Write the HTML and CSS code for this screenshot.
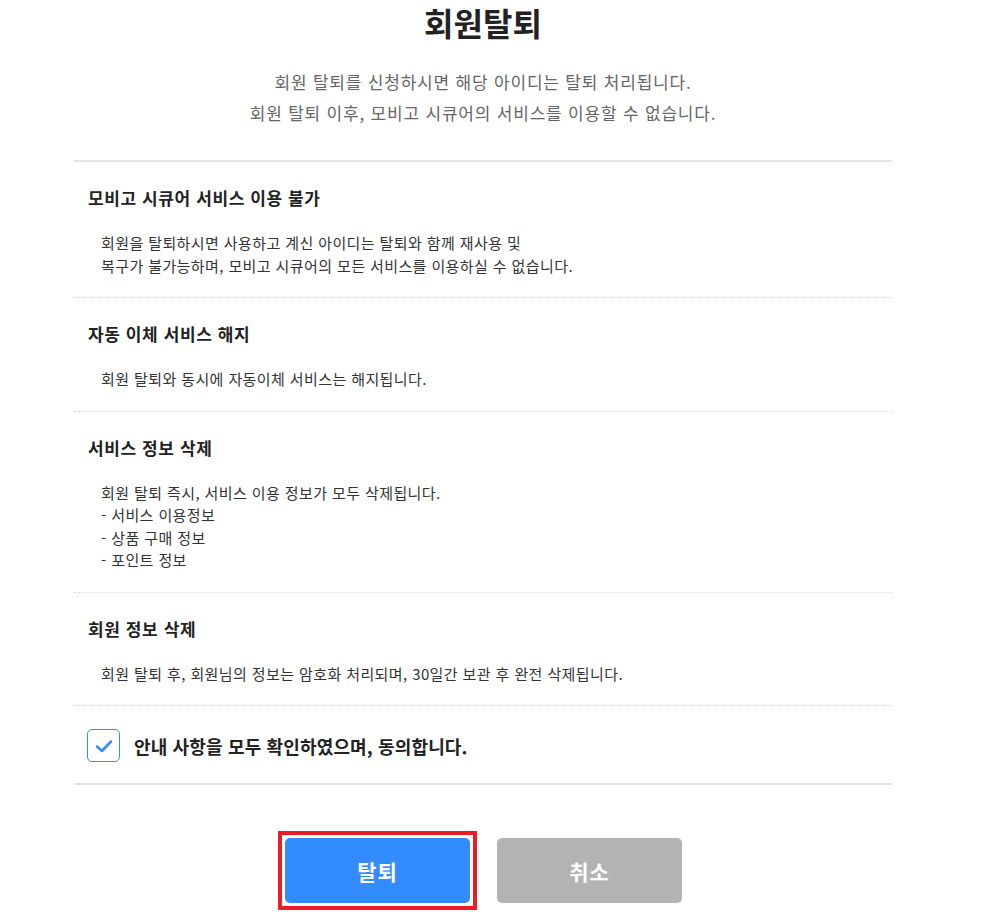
FILE: index.html
```html
<!DOCTYPE html>
<html lang="ko">
<head>
  <meta charset="UTF-8">
  <meta name="viewport" content="width=device-width, initial-scale=1.0">
  <title>회원탈퇴</title>
  <link rel="stylesheet" href="styles.css">
</head>
<body>
  <div class="wrap">
    <h1 class="title">회원탈퇴</h1>
    <p class="desc">
      회원 탈퇴를 신청하시면 해당 아이디는 탈퇴 처리됩니다.<br>
      회원 탈퇴 이후, 모비고 시큐어의 서비스를 이용할 수 없습니다.
    </p>

    <div class="notice">
      <div class="section">
        <h2>모비고 시큐어 서비스 이용 불가</h2>
        <p>회원을 탈퇴하시면 사용하고 계신 아이디는 탈퇴와 함께 재사용 및<br>
          복구가 불가능하며, 모비고 시큐어의 모든 서비스를 이용하실 수 없습니다.</p>
      </div>
      <div class="section">
        <h2>자동 이체 서비스 해지</h2>
        <p>회원 탈퇴와 동시에 자동이체 서비스는 해지됩니다.</p>
      </div>
      <div class="section">
        <h2>서비스 정보 삭제</h2>
        <p>회원 탈퇴 즉시, 서비스 이용 정보가 모두 삭제됩니다.<br>
          - 서비스 이용정보<br>
          - 상품 구매 정보<br>
          - 포인트 정보</p>
      </div>
      <div class="section">
        <h2>회원 정보 삭제</h2>
        <p>회원 탈퇴 후, 회원님의 정보는 암호화 처리되며, 30일간 보관 후 완전 삭제됩니다.</p>
      </div>
      <label class="agree">
        <span class="check">
          <svg width="20" height="16" viewBox="0 0 20 16">
            <path d="M3 8.5 L8 13 L17 3.5" fill="none" stroke="#338cff" stroke-width="2.6" stroke-linecap="round" stroke-linejoin="round"/>
          </svg>
        </span>
        안내 사항을 모두 확인하였으며, 동의합니다.
      </label>
    </div>

    <div class="btns">
      <!-- 강조 표시된 탈퇴 버튼 -->
      <span class="focus-frame">
        <button class="btn btn-leave">탈퇴</button>
      </span>
      <button class="btn btn-cancel">취소</button>
    </div>
  </div>
</body>
</html>
```

FILE: styles.css
```css
* {
  box-sizing: border-box;
}

body {
  margin: 0;
  background-color: #fff;
  font-family: "Noto Sans CJK KR", "Noto Sans", sans-serif;
  color: #222;
}

.wrap {
  width: 818px;
  margin-left: 74px;
}

.title {
  margin: 0;
  font-size: 32px;
  line-height: 44px;
  font-weight: 700;
  text-align: center;
  color: #222;
}

.desc {
  margin: 22px 0 0;
  font-size: 17px;
  line-height: 31px;
  letter-spacing: 0.8px;
  text-align: center;
  color: #666;
}

.notice {
  margin-top: 32px;
  border-top: 2px solid #e3e3e3;
  border-bottom: 2px solid #e3e3e3;
}

.section {
  padding: 24px 0 20px;
  border-bottom: 1px dotted #d6d6d6;
}

.section h2 {
  margin: 0;
  padding-left: 14px;
  font-size: 17px;
  line-height: 24px;
  letter-spacing: 0.6px;
  font-weight: 700;
  color: #222;
}

.section p {
  margin: 22px 0 0;
  padding-left: 27px;
  font-size: 15px;
  line-height: 22.5px;
  letter-spacing: 0.4px;
  color: #333;
}

.agree {
  display: flex;
  align-items: center;
  gap: 14px;
  padding: 23px 0 21px 13px;
  font-size: 18px;
  letter-spacing: 0.15px;
  font-weight: 700;
  color: #222;
}

.check {
  display: flex;
  align-items: center;
  justify-content: center;
  width: 33px;
  height: 33px;
  border: 1px solid #338cff;
  border-radius: 5px;
}

.btns {
  display: flex;
  justify-content: center;
  align-items: center;
  gap: 20px;
  margin-top: 46px;
  padding-right: 6px;
}

.focus-frame {
  display: block;
  padding: 3px;
  border: 4px solid #ed1c24;
}

.btn {
  display: block;
  width: 185px;
  height: 65px;
  border: none;
  border-radius: 5px;
  font-family: inherit;
  font-size: 21px;
  letter-spacing: 1px;
  font-weight: 700;
  color: #fff;
}

.btn-leave {
  background-color: #338cff;
}

.btn-cancel {
  background-color: #b3b3b3;
}
```
